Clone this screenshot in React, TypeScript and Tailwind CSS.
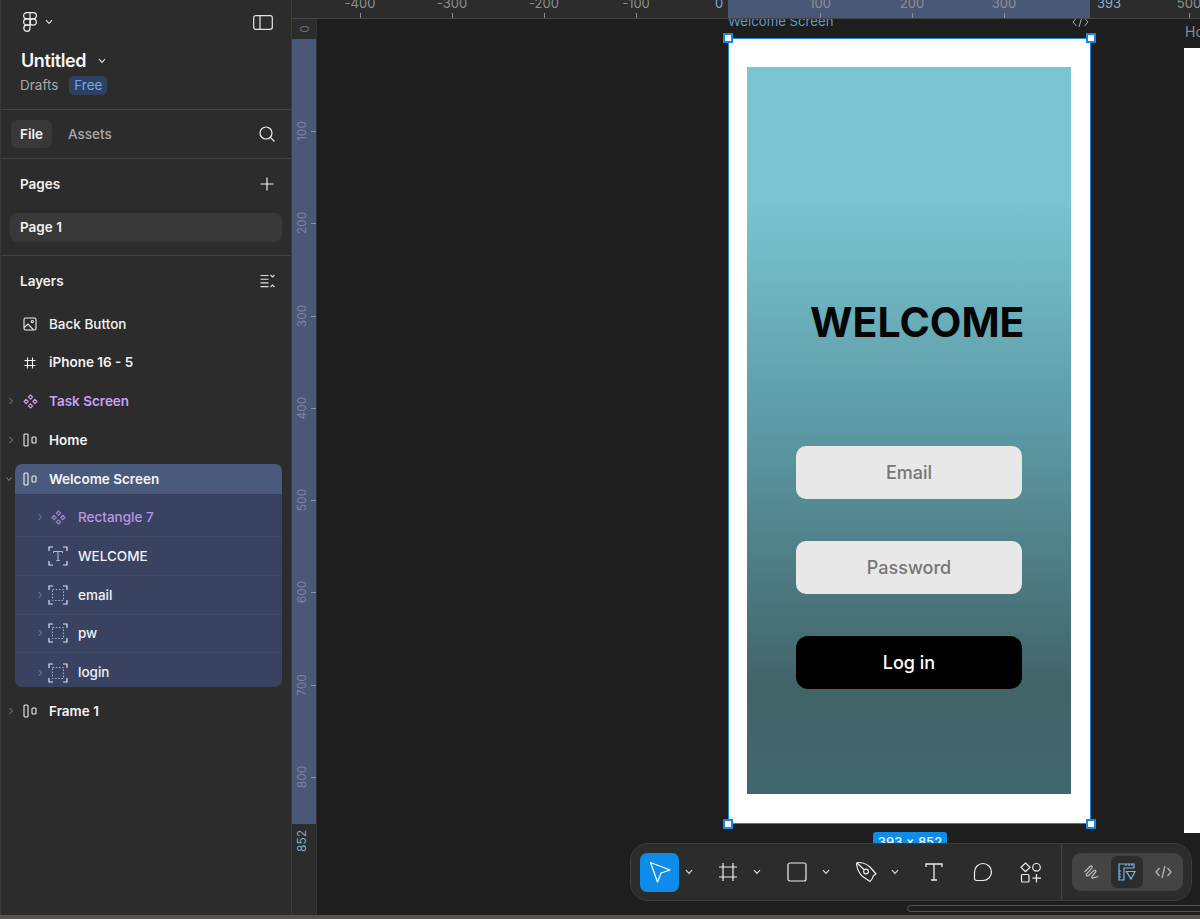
const font = { fontFamily: "Inter, 'Noto Sans', sans-serif" };

const Chevron = ({ className = "" }: { className?: string }) => (
  <svg width="8" height="6" viewBox="0 0 8 6" fill="none" className={className}>
    <path d="M1 1.2 4 4.4 7 1.2" stroke="currentColor" strokeWidth="1.2" />
  </svg>
);

const Caret = ({ open = false }: { open?: boolean }) => (
  <svg width="6" height="8" viewBox="0 0 6 8" fill="none" className="text-[#8a8a8a]">
    <path d={open ? "M0.5 2.5 3 5.5 5.5 2.5" : "M1.5 1 4.5 4 1.5 7"} stroke="currentColor" strokeWidth="1" />
  </svg>
);

const FigmaLogo = () => (
  <svg width="14" height="20" viewBox="0 0 14 20" fill="none" stroke="#f0f0f0" strokeWidth="1.2">
    <path d="M7 .7H3.7a3 3 0 0 0 0 6.2H7V.7ZM7 .7h3.3a3 3 0 0 1 0 6.2H7" />
    <path d="M7 6.9H3.7a3 3 0 0 0 0 6.2H7V6.9Z" />
    <circle cx="10.2" cy="10" r="3.1" />
    <path d="M3.7 13.1H7v3.1a3.1 3.1 0 1 1-3.3-3.1Z" />
  </svg>
);

const ImageIcon = () => (
  <svg width="14" height="14" viewBox="0 0 14 14" fill="none" stroke="#eee" strokeWidth="1.1">
    <rect x="1" y="1" width="12" height="12" rx="1.5" />
    <circle cx="9.3" cy="4.6" r="1.1" />
    <path d="M1.2 10.5 5 7l5.5 5.8" />
  </svg>
);

const FrameIcon = () => (
  <svg width="14" height="14" viewBox="0 0 14 14" fill="none" stroke="#eee" strokeWidth="1.1">
    <path d="M4.5 1.5v11M9.5 1.5v11M1.5 4.5h11M1.5 9.5h11" />
  </svg>
);

const ComponentIcon = ({ color = "#c9a0f5" }: { color?: string }) => (
  <svg width="15" height="15" viewBox="0 0 15 15" fill="none" stroke={color} strokeWidth="1.1">
    <path d="M7.5 1 9.6 3.1 7.5 5.2 5.4 3.1ZM3.1 5.4 5.2 7.5 3.1 9.6 1 7.5ZM11.9 5.4 14 7.5 11.9 9.6 9.8 7.5ZM7.5 9.8 9.6 11.9 7.5 14 5.4 11.9Z" />
  </svg>
);

const SlotsIcon = () => (
  <svg width="14" height="14" viewBox="0 0 14 14" fill="none" stroke="#eee" strokeWidth="1.1">
    <rect x="1" y="1" width="4" height="12" rx="1" />
    <rect x="9" y="4" width="4" height="6" rx="1" />
  </svg>
);

const Corners = ({ letter = false }: { letter?: boolean }) => (
  <svg width="20" height="20" viewBox="0 0 20 20" fill="none">
    <path d="M1 5V1h4M15 1h4v4M19 15v4h-4M5 19H1v-4" stroke="#dfe3ee" strokeWidth="1.2" />
    {letter ? (
      <path d="M5.5 7V5.5h9V7M10 5.5v9M8.3 14.5h3.4" stroke="#b9bfce" strokeWidth="1" />
    ) : (
      <rect x="4.5" y="4.5" width="11" height="11" stroke="#aab1c4" strokeWidth="1" strokeDasharray="1.6 1.6" />
    )}
  </svg>
);

type Row = {
  name: string;
  icon: React.ReactNode;
  caret?: "closed" | "open";
  color?: string;
  semibold?: boolean;
};

const topLayers: Row[] = [
  { name: "Back Button", icon: <ImageIcon /> },
  { name: "iPhone 16 - 5", icon: <FrameIcon />, semibold: true },
  { name: "Task Screen", icon: <ComponentIcon />, caret: "closed", color: "text-[#c9a0f5]", semibold: true },
  { name: "Home", icon: <SlotsIcon />, caret: "closed", semibold: true },
];

const childLayers: Row[] = [
  { name: "Rectangle 7", icon: <ComponentIcon color="#9c84c8" />, caret: "closed", color: "text-[#b596e6]" },
  { name: "WELCOME", icon: <Corners letter /> },
  { name: "email", icon: <Corners />, caret: "closed" },
  { name: "pw", icon: <Corners />, caret: "closed" },
  { name: "login", icon: <Corners />, caret: "closed" },
];

const LayerRow = ({ row }: { row: Row }) => (
  <div className="flex h-[38.7px] items-center">
    <div className="flex w-[22px] justify-center pr-[1px]">{row.caret ? <Caret /> : null}</div>
    <div className="flex w-[16px] justify-center">{row.icon}</div>
    <p className={`ml-[11px] text-[13.5px] ${row.semibold ? "font-semibold" : "font-medium"} ${row.color ?? "text-[#f2f2f2]"}`}>
      {row.name}
    </p>
  </div>
);

const ChildRow = ({ row }: { row: Row }) => (
  <div className="flex h-[38.7px] shrink-0 items-center border-b border-[#3e4963] last:border-b-0">
    <div className="flex w-[29px] justify-center pl-[21px]">{row.caret ? <Caret /> : null}</div>
    <div className="ml-[4px] flex w-[20px] justify-center">{row.icon}</div>
    <p className={`ml-[10px] text-[13.5px] font-medium ${row.color ?? "text-[#eef0f6]"}`}>{row.name}</p>
  </div>
);

const Sidebar = () => (
  <aside className="flex h-full w-[292px] shrink-0 flex-col border-r border-l border-r-[#3c3c3c] border-l-[#3a3a3a] bg-[#2c2c2c]">
    <div className="h-[110px] shrink-0 border-b border-[#444] pl-[19px] pr-[19px]">
      <div className="flex h-[44px] items-center justify-between pl-[3px]">
        <div className="flex items-center gap-[8px] text-[#ddd]">
          <FigmaLogo />
          <Chevron />
        </div>
        <svg width="20" height="15" viewBox="0 0 20 15" fill="none" stroke="#e4e4e4" strokeWidth="1.2" className="mr-[-1px]">
          <rect x="0.7" y="0.7" width="18.6" height="13.6" rx="2" />
          <path d="M7 1v13" />
        </svg>
      </div>
      <div className="mt-[6px] flex h-[22px] items-center pl-[1px]">
        <p className="text-[18px] font-semibold leading-none tracking-[-0.4px] text-[#f5f5f5]">Untitled</p>
        <Chevron className="ml-[12px] text-[#ddd]" />
      </div>
      <div className="mt-[3px] flex items-center gap-[11px]">
        <p className="text-[13.5px] text-[#a8a8a8]">Drafts</p>
        <span className="flex h-[19px] w-[38px] items-center justify-center rounded-[5px] bg-[#2f4163] text-[13.5px] text-[#6ea8e8]">
          Free
        </span>
      </div>
    </div>

    <div className="flex h-[49px] shrink-0 items-center border-b border-[#444] pl-[10px] pr-[16px]">
      <div className="flex h-[28px] w-[41px] items-center justify-center rounded-[6px] bg-[#383838] pt-[1px] text-[13.5px] font-semibold text-[#f2f2f2]">
        File
      </div>
      <p className="ml-[16px] pt-[1px] text-[13.5px] font-medium text-[#a8a8a8]">Assets</p>
      <svg width="16" height="16" viewBox="0 0 16 16" fill="none" stroke="#eee" strokeWidth="1.2" className="ml-auto">
        <circle cx="7" cy="7" r="6" />
        <path d="M11.4 11.4 15.5 15.5" />
      </svg>
    </div>

    <div className="h-[97px] shrink-0 border-b border-[#444] px-[9px]">
      <div className="flex h-[50px] items-center justify-between pl-[10px] pr-[8px]">
        <p className="text-[13.5px] font-semibold text-[#f2f2f2]">Pages</p>
        <svg width="14" height="14" viewBox="0 0 14 14" fill="none" stroke="#eee" strokeWidth="1.2">
          <path d="M7 0.5v13M0.5 7h13" />
        </svg>
      </div>
      <div className="mt-[4px] flex h-[29px] items-center rounded-[7px] bg-[#383838] pb-[1px] pl-[10px] text-[13.5px] font-semibold text-[#f2f2f2]">
        Page 1
      </div>
    </div>

    <div className="flex h-[48.5px] shrink-0 items-center justify-between pl-[19px] pr-[16px] pt-[1px]">
      <p className="text-[13.5px] font-semibold text-[#f2f2f2]">Layers</p>
      <svg width="15" height="14" viewBox="0 0 15 14" fill="none" stroke="#ddd" strokeWidth="1.1">
        <path d="M0.5 1.5h8M0.5 5.2h8M0.5 8.9h8M0.5 12.6h8M10.5 1l2 2 2-2M10.5 13l2-2 2 2" />
      </svg>
    </div>

    <div className="-ml-px">
      {topLayers.map((row) => (
        <LayerRow key={row.name} row={row} />
      ))}
      <div className="mt-[4.7px] flex flex-col">
        <div className="relative ml-[15px] mr-[9px] flex h-[30px] items-center rounded-t-[7px] bg-[#4a5a7c]">
          <div className="absolute left-[-9px]">
            <Caret open />
          </div>
          <div className="ml-[7px] flex w-[16px] justify-center">
            <SlotsIcon />
          </div>
          <p className="ml-[11px] text-[13.5px] font-semibold text-[#f5f5f5]">Welcome Screen</p>
        </div>
        <div className="ml-[15px] mr-[9px] flex h-[193px] flex-col overflow-hidden rounded-b-[7px] bg-[#394361] pt-[4.5px]">
          {childLayers.map((row) => (
            <ChildRow key={row.name} row={row} />
          ))}
        </div>
      </div>
      <div className="mt-[5px]">
        <LayerRow row={{ name: "Frame 1", icon: <SlotsIcon />, caret: "closed", semibold: true }} />
      </div>
    </div>
  </aside>
);

const topTicks = [
  { x: 43, label: "-400" },
  { x: 135, label: "-300" },
  { x: 227, label: "-200" },
  { x: 319, label: "-100" },
  { x: 503, label: "100" },
  { x: 595, label: "200" },
  { x: 687, label: "300" },
  { x: 872, label: "500" },
];

const leftTicks = [
  { y: 112, label: "100" },
  { y: 204, label: "200" },
  { y: 297, label: "300" },
  { y: 389, label: "400" },
  { y: 481, label: "500" },
  { y: 573, label: "600" },
  { y: 666, label: "700" },
  { y: 758, label: "800" },
];

const TopRuler = () => (
  <div className="relative h-[19px] shrink-0 overflow-hidden border-b border-[#444] bg-[#2c2c2c]">
    <div className="absolute left-[411px] top-0 h-full w-[362px] bg-[#4a5878]" />
    {topTicks.map((t) => (
      <div key={t.label}>
        <span className="absolute top-[-6px] w-[40px] -translate-x-1/2 text-center text-[13px] text-[#8f8f8f]" style={{ left: t.x }}>
          {t.label}
        </span>
        <span className="absolute top-[13px] h-[5px] w-px bg-[#8f8f8f]" style={{ left: t.x }} />
      </div>
    ))}
    <span className="absolute left-[398px] top-[-6px] text-[13px] text-[#7fb0d0]">0</span>
    <span className="absolute left-[780px] top-[-6px] text-[13px] text-[#7fb0d0]">393</span>
  </div>
);

const LeftRuler = () => (
  <div className="relative w-[25px] shrink-0 overflow-hidden border-r border-[#333] bg-[#2c2c2c]">
    <div className="absolute left-0 top-[20px] h-[785px] w-full bg-[#4a5878]" />
    <span className="absolute left-[13px] top-[10px] -translate-x-1/2 -translate-y-1/2 -rotate-90 text-[12px] text-[#66727f]">0</span>
    {leftTicks.map((t) => (
      <div key={t.label}>
        <span
          className="absolute left-[10px] -translate-x-1/2 -translate-y-1/2 -rotate-90 text-[12px] text-[#7d879c]"
          style={{ top: t.y }}
        >
          {t.label}
        </span>
        <span className="absolute left-[19px] h-px w-[5px] bg-[#8b93a6]" style={{ top: t.y }} />
      </div>
    ))}
    <span className="absolute left-[10px] top-[822px] -translate-x-1/2 -translate-y-1/2 -rotate-90 text-[12px] text-[#7fb0d0]">852</span>
  </div>
);

const Handle = ({ className }: { className: string }) => (
  <div className={`absolute h-[10px] w-[10px] border-[2px] border-[#1b86d6] bg-white ${className}`} />
);

const InputBox = ({ label }: { label: string }) => (
  <div className="flex h-[53px] items-center justify-center rounded-[10px] bg-[#e8e8e8] text-[18px] font-medium text-[#767676]">{label}</div>
);

const FrameMock = () => (
  <div className="absolute left-[410.5px] top-[18.5px] h-[786px] w-[363px] border-[1.5px] border-[#1b86d6] bg-white">
    <Handle className="left-[-6px] top-[-6px]" />
    <Handle className="right-[-6px] top-[-6px]" />
    <Handle className="bottom-[-6px] left-[-6px]" />
    <Handle className="bottom-[-6px] right-[-6px]" />
    <div className="ml-[18.5px] mt-[28.5px] flex h-[727px] w-[324px] flex-col bg-[linear-gradient(180deg,#79c5d2_0%,#79c5d2_18%,#5c99a4_50%,#426469_85%,#41666d_100%)]">
      <p className="mt-[230px] pl-[63px] text-[41px] font-bold leading-[50px] text-[#050505]">WELCOME</p>
      <div className="mt-[99px] flex flex-col gap-[42px] px-[49px]">
        <InputBox label="Email" />
        <InputBox label="Password" />
        <div className="flex h-[53px] items-center justify-center rounded-[12px] bg-black text-[18px] font-medium text-white">Log in</div>
      </div>
    </div>
  </div>
);

const Toolbar = () => (
  <div className="absolute left-[313px] top-[824px] flex h-[58px] w-[562px] items-center rounded-[18px] border border-[#3c3c3c] bg-[#2c2c2c] pl-[9px]">
    <div className="flex h-[39px] w-[39px] items-center justify-center rounded-[7px] bg-[#0d8ce9]">
      <svg width="24" height="24" viewBox="0 0 24 24" fill="none" stroke="#fff" strokeWidth="1.3" strokeLinejoin="round">
        <path d="M2.5 2.5 22 10 13 13 9.5 22Z" />
      </svg>
    </div>
    <Chevron className="ml-[6px] text-[#ddd]" />
    <svg width="20" height="20" viewBox="0 0 20 20" fill="none" stroke="#eee" strokeWidth="1.2" className="ml-[25px]">
      <path d="M5 1v18M15 1v18M1 5h18M1 15h18" />
    </svg>
    <Chevron className="ml-[15px] text-[#ddd]" />
    <svg width="20" height="20" viewBox="0 0 20 20" fill="none" stroke="#eee" strokeWidth="1.2" className="ml-[26px]">
      <rect x="1" y="1" width="18" height="18" rx="2" />
    </svg>
    <Chevron className="ml-[15px] text-[#ddd]" />
    <svg width="22" height="22" viewBox="0 0 22 22" fill="none" stroke="#eee" strokeWidth="1.2" strokeLinejoin="round" className="ml-[25px]">
      <path d="M3 1.5C7 1.5 12 3 15 6l6 7-2.5 1.5-1.5 3.5-2 2.5-8-5.5C4 12 2 6 1.5 3 1.4 2 2 1.5 3 1.5Z" />
      <circle cx="11" cy="10.5" r="2.4" />
      <path d="M2 2 9.3 8.8" />
    </svg>
    <Chevron className="ml-[14px] text-[#ddd]" />
    <svg width="18" height="18" viewBox="0 0 18 18" fill="none" stroke="#eee" strokeWidth="1.3" className="ml-[26px]">
      <path d="M1 4V1h16v3M9 1v16M6 17h6" />
    </svg>
    <svg width="20" height="20" viewBox="0 0 20 20" fill="none" stroke="#eee" strokeWidth="1.2" className="ml-[30px]">
      <path d="M10 1.5a8.5 8.5 0 0 1 8.5 8.5c0 4.7-3.8 8.5-8.5 8.5H3.5a2 2 0 0 1-2-2V10A8.5 8.5 0 0 1 10 1.5Z" />
    </svg>
    <svg width="22" height="21" viewBox="0 0 22 21" fill="none" stroke="#eee" strokeWidth="1.2" className="ml-[27px]">
      <path d="M5.5 1 10 5.3 5.5 9.6 1 5.3Z" />
      <circle cx="16.5" cy="5.3" r="3.8" />
      <rect x="1.5" y="12.5" width="7.5" height="7.5" rx="1" />
      <path d="M16.5 12v8.5M12.5 16.2h8.5" />
    </svg>
    <div className="ml-[19px] h-full w-px bg-[#444]" />
    <div className="ml-[10px] flex h-[38px] w-[111px] items-center rounded-[9px] bg-[#444]">
      <div className="flex w-[39px] justify-center">
        <svg width="17" height="17" viewBox="0 0 17 17" fill="none" stroke="#bbb" strokeWidth="1.2">
          <path d="M1.5 8 7 2.5c1.5-1.4 3 .3 1.8 1.6L3.5 10c-1 1.5.7 2.6 2 1.5L11 6.5c1.2-1 2.6.5 1.6 1.6L9 12.5c-.8 1 .3 2.2 1.5 1.4l5-1.4" />
        </svg>
      </div>
      <div className="flex h-[32px] w-[32px] items-center justify-center rounded-[6px] bg-[#2c2c2c]">
        <svg width="18" height="18" viewBox="0 0 18 18" fill="none" stroke="#7cb6e8" strokeWidth="1.2">
          <path d="M1 1h15v4H6v12H1ZM1 8h2M1 11h2M1 14h2M8 1v2M11 1v2M14 1v2" />
          <path d="M8.5 8.5H17l-4 7.500Z" />
        </svg>
      </div>
      <div className="flex flex-1 justify-center">
        <svg width="17" height="14" viewBox="0 0 17 14" fill="none" stroke="#bbb" strokeWidth="1.2">
          <path d="M4.5 3 1 7l3.5 4M12.5 3 16 7l-3.5 4M10 1 7 13" />
        </svg>
      </div>
    </div>
  </div>
);

const Canvas = () => (
  <div className="relative flex-1 overflow-hidden bg-[#1e1e1e]">
    <p className="absolute left-[411px] top-[-6px] text-[13.2px] leading-[16px] text-[#5f9cc4]">Welcome Screen</p>
    <svg width="17" height="12" viewBox="0 0 17 12" fill="none" stroke="#8fb4cc" strokeWidth="1" className="absolute left-[755px] top-[-3px]">
      <path d="M4.5 2 1 6l3.5 4M12.5 2 16 6l-3.5 4M10 1 7 11" />
    </svg>
    <p className="absolute left-[868px] top-[4px] text-[14px] leading-[18px] text-[#8a8a8a]">Ho</p>
    <div className="absolute left-[867px] top-[29px] h-[785px] w-[20px] bg-white" />
    <FrameMock />
    <div className="absolute left-[556px] top-[813px] h-[24px] w-[74px] rounded-[3px] bg-[#0d8ce9] pt-[1px] text-center text-[13px] font-medium text-[#e8f4ff]">
      393 × 852
    </div>
    <Toolbar />
    <div className="absolute left-[590px] top-[886px] h-[7px] w-[400px] rounded-full border border-[#555] bg-[#1e1e1e]" />
  </div>
);

export default function App() {
  return (
    <div className="flex h-[919px] w-[1200px] flex-col overflow-hidden bg-[#1e1e1e]" style={font}>
      <div className="flex min-h-0 flex-1">
        <Sidebar />
        <div className="flex min-w-0 flex-1 flex-col">
          <div className="flex h-[19px] shrink-0">
            <div className="w-[25px] shrink-0 border-b border-[#444] bg-[#2c2c2c]" />
            <div className="min-w-0 flex-1">
              <TopRuler />
            </div>
          </div>
          <div className="flex min-h-0 flex-1">
            <LeftRuler />
            <Canvas />
          </div>
        </div>
      </div>
      <div className="h-[4px] shrink-0 bg-[#55554d]" />
    </div>
  );
}
